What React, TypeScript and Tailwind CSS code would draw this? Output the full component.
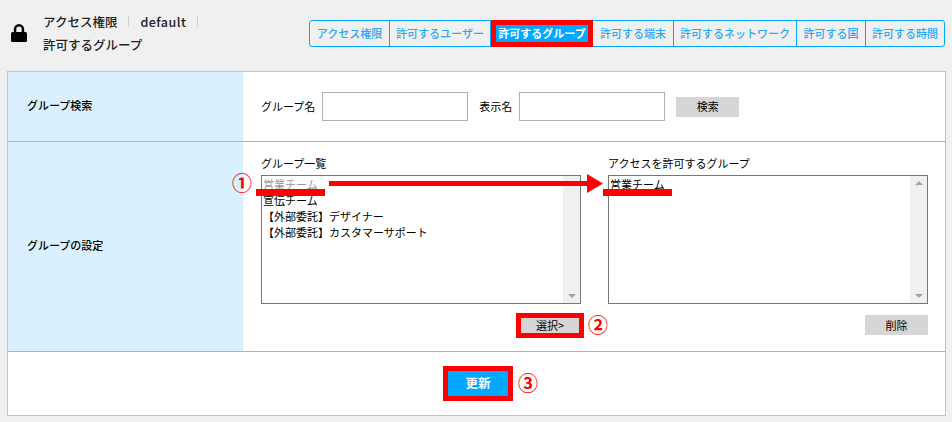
const tabs = [
  { label: "アクセス権限", width: "w-[80px]" },
  { label: "許可するユーザー", width: "w-[101px]" },
  { label: "許可するグループ", width: "w-[102px]", active: true },
  { label: "許可する端末", width: "w-[81px]" },
  { label: "許可するネットワーク", width: "w-[123px]" },
  { label: "許可する国", width: "w-[69px]" },
  { label: "許可する時間", width: "w-[78px]" },
];

function ListBox({ items }: { items: { text: string; muted?: boolean }[] }) {
  return (
    <div className="flex h-[129px] w-[320px] border border-[#767676] bg-white">
      <div className="flex-1 text-[11px] leading-[16px] text-black">
        {items.map((item) => (
          <div key={item.text} className={item.muted ? "pl-[1px] text-[#9a9a9a]" : "pl-[1px]"}>
            {item.text}
          </div>
        ))}
      </div>
      <div className="flex w-[17px] flex-col items-center justify-between bg-[#f0f0f0] py-[5px]">
        <div className="h-0 w-0 border-x-[4px] border-b-[4px] border-x-transparent border-b-[#a3a3a3]" />
        <div className="h-0 w-0 border-x-[4px] border-t-[4px] border-x-transparent border-t-[#a3a3a3]" />
      </div>
    </div>
  );
}

function Annotations() {
  return (
    <>
      <div className="absolute left-[256px] top-[189px] h-[7px] w-[69px] bg-[#ff0000]" />
      <div className="absolute left-[603px] top-[189px] h-[7px] w-[69px] bg-[#ff0000]" />
      <svg className="absolute left-[329px] top-[174px]" width="276" height="20" viewBox="0 0 276 20">
        <path d="M0 7h258V0l16 9.5L258 19v-7H0z" fill="#ff0000" />
      </svg>
      <span className="absolute left-[232px] top-[171px] text-[20px] font-bold leading-[24px] text-[#ff0000]">①</span>
      <span className="absolute left-[588px] top-[313px] text-[20px] font-bold leading-[24px] text-[#ff0000]">②</span>
      <span className="absolute left-[518px] top-[371px] text-[20px] font-bold leading-[24px] text-[#ff0000]">③</span>
    </>
  );
}

export default function App() {
  return (
    <div
      className="relative h-[422px] w-[952px] overflow-hidden bg-[#f0f0f0] text-black"
      style={{ fontFamily: '"Noto Sans CJK JP", "Noto Sans", sans-serif' }}
    >
      {/* Header */}
      <div className="flex h-[71px] items-start justify-between pl-[11px] pr-[7px]">
        <div className="flex items-center pt-[10px]">
          <svg width="16" height="18" viewBox="0 0 16 18" className="-mt-[1px]">
            <path
              d="M2.800 8V5.300a5.200 5.200 0 0 1 10.400 0V8h1.100c.9 0 1.700.7 1.700 1.600v6.800c0 .9-.8 1.600-1.700 1.600H1.700C.8 18 0 17.300 0 16.400V9.600C0 8.700.8 8 1.700 8zm2.500 0h5.400V5.300a2.700 2.700 0 0 0-5.400 0z"
              fill="#000"
            />
          </svg>
          <div className="ml-[16px] text-[12.5px] font-medium leading-[23px] text-[#222]">
            <div className="flex items-center">
              <span>アクセス権限</span>
              <span className="mx-[11px] h-[11px] w-px bg-[#cfcfcf]" />
              <span className="tracking-[0.5px]">default</span>
              <span className="ml-[11px] h-[11px] w-px bg-[#cfcfcf]" />
            </div>
            <div>許可するグループ</div>
          </div>
        </div>
        <div className="mt-[20px] flex h-[27px] rounded-[3px] border border-[#00a8ff]">
          {tabs.map((tab) =>
            tab.active ? (
              <div
                key={tab.label}
                className={`${tab.width} -my-px flex h-[27px] shrink-0 items-center justify-center border-[5px] border-[#ff0000] bg-[#00a8ff] text-[11px] font-bold text-white`}
              >
                {tab.label}
              </div>
            ) : (
              <div
                key={tab.label}
                className={`${tab.width} flex shrink-0 items-center justify-center border-r border-[#00a8ff] text-[11px] font-medium text-[#2aa9f5] last:border-r-0`}
              >
                {tab.label}
              </div>
            ),
          )}
        </div>
      </div>

      {/* Card */}
      <div className="mx-[7px] h-[345px] w-[939px] border border-[#c4c4c4] bg-white">
        <div className="flex h-[70px] border-b border-[#a9b4bd]">
          <div className="flex w-[235px] shrink-0 items-center bg-[#d8f0ff] pb-[2px] pl-[19px] text-[11px] font-medium">
            グループ検索
          </div>
          <div className="flex items-center pl-[18px] text-[11px]">
            <span>グループ名</span>
            <div className="ml-[7px] h-[29px] w-[146px] border border-[#b0b0b0]" />
            <span className="ml-[11px]">表示名</span>
            <div className="ml-[7px] h-[29px] w-[146px] border border-[#b0b0b0]" />
            <div className="ml-[11px] flex h-[20px] w-[63px] items-center justify-center bg-[#d6d6d6] text-[11px]">
              検索
            </div>
          </div>
        </div>

        <div className="flex h-[210px] border-b border-[#a9b4bd]">
          <div className="flex w-[235px] shrink-0 items-center bg-[#d8f0ff] pb-[2px] pl-[19px] text-[11px] font-medium">
            グループの設定
          </div>
          <div className="flex gap-[27px] pl-[18px] pt-[13px]">
            <div>
              <div className="mb-[3px] h-[17px] text-[11px] leading-[17px]">グループ一覧</div>
              <ListBox
                items={[
                  { text: "営業チーム", muted: true },
                  { text: "宣伝チーム" },
                  { text: "【外部委託】デザイナー" },
                  { text: "【外部委託】カスタマーサポート" },
                ]}
              />
              <div className="mt-[9px] flex h-[25px] justify-end">
                <div className="-mr-[3px] flex h-[25px] w-[68px] items-center justify-center border-[5px] border-[#ff0000] bg-[#d6d6d6] text-[11px]">
                  選択&gt;
                </div>
              </div>
            </div>
            <div>
              <div className="mb-[3px] h-[17px] text-[11px] leading-[17px]">アクセスを許可するグループ</div>
              <ListBox items={[{ text: "営業チーム" }]} />
              <div className="mt-[11px] flex justify-end">
                <div className="flex h-[20px] w-[63px] items-center justify-center bg-[#d6d6d6] text-[11px]">
                  削除
                </div>
              </div>
            </div>
          </div>
        </div>

        <div className="flex h-[63px] items-center justify-center pl-[3px]">
          <div className="flex h-[35px] w-[70px] items-center justify-center border-[5px] border-[#ff0000] bg-[#00a8ff] text-[12.5px] font-bold text-white">
            更新
          </div>
        </div>
      </div>

      <Annotations />
    </div>
  );
}
